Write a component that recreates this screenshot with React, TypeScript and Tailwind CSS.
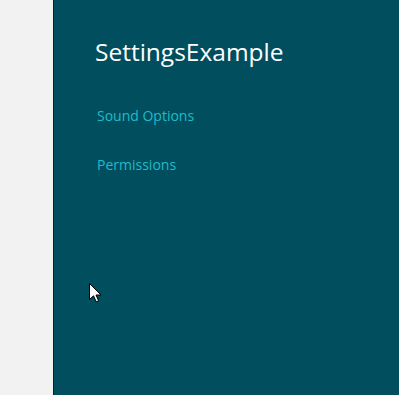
import React from "react";

export default function App() {
  return (
    <div className="flex h-[395px] w-[399px] overflow-hidden" style={{ fontFamily: '"Open Sans", "Noto Sans", sans-serif' }}>
      <div className="w-[53px] shrink-0 bg-[#f2f2f2]" />
      <div className="w-px shrink-0 bg-[#1c1c1c]" />
      <div className="relative flex-1 bg-[#004e5e] pl-[41px] pt-[35px]">
        <h1 className="text-[24.5px] leading-[34px] font-normal text-white">SettingsExample</h1>
        <nav className="mt-[37px] flex flex-col gap-[29px] pl-[2px]">
          <a className="text-[14px] leading-[20px] text-[#1fbccb]">Sound Options</a>
          <a className="text-[14px] leading-[20px] text-[#1fbccb]">Permissions</a>
        </nav>
        <svg className="absolute left-[35px] top-[283px]" width="13" height="20" viewBox="0 0 13 20">
          <path d="M0.5 0.5 L0.5 16.5 L4.5 12.8 L7.2 18.8 L9.6 17.8 L7 12 L12 12 Z" fill="#ffffff" stroke="#000000" strokeWidth="1" strokeLinejoin="miter" />
        </svg>
      </div>
    </div>
  );
}
